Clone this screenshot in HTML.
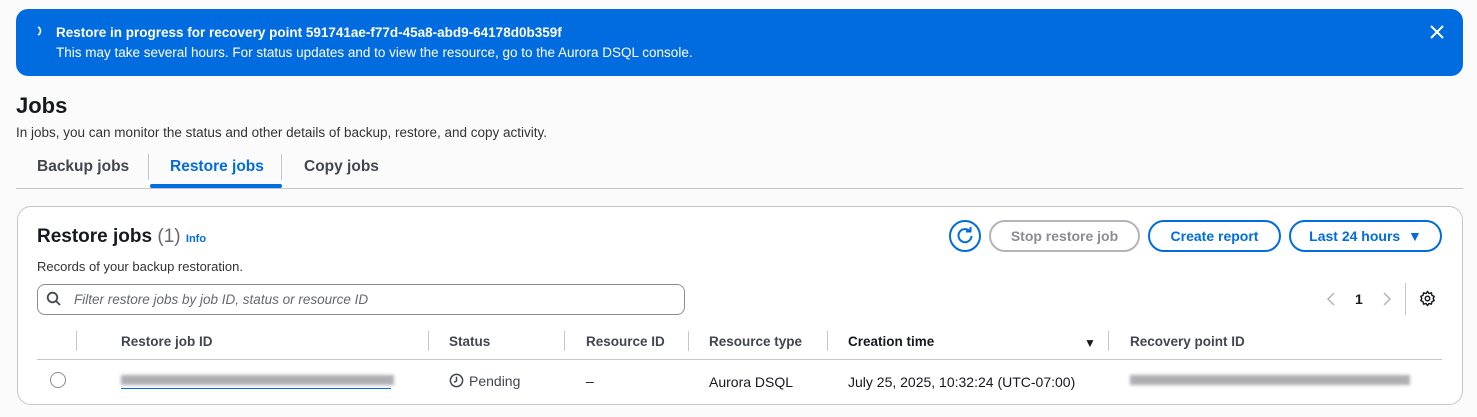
<!DOCTYPE html>
<html><head><style>
*{box-sizing:border-box;margin:0;padding:0}
body{width:1477px;height:417px;background:#fbfbfb;font-family:"Liberation Sans",sans-serif;color:#16191f;position:relative;overflow:hidden;font-size:13px}
.a{position:absolute;white-space:nowrap}
.flash{position:absolute;left:16px;top:9px;width:1447px;height:67px;background:#006ce0;border-radius:12px;color:#fff}
.card{position:absolute;left:17px;top:206px;width:1446px;height:199px;background:#fff;border:1px solid #c6c6cd;border-radius:14px}
.btn{position:absolute;top:220px;height:32px;border:2px solid #006ce0;border-radius:16px;color:#006ce0;font-weight:bold;font-size:14px;text-align:center;line-height:28px}
.th{position:absolute;top:334px;font-weight:bold;font-size:13.5px;color:#424650}
.sep{position:absolute;top:331px;width:1px;height:20px;background:#c6c6cd}
.blur{position:absolute;height:10px;background:#9a9aa0;filter:blur(1.5px);opacity:.8}
</style></head><body>
<div class="flash">
<svg class="a" style="left:19px;top:16px" width="10" height="12" viewBox="0 0 10 12"><path d="M3 2 A4.5 4.5 0 0 1 3 10" fill="none" stroke="#fff" stroke-width="1.6"/></svg>
<div class="a" style="left:40px;top:16px;font-weight:bold;font-size:13.5px">Restore in progress for recovery point 591741ae-f77d-45a8-abd9-64178d0b359f</div>
<div class="a" style="left:40px;top:36px;font-size:13.5px">This may take several hours. For status updates and to view the resource, go to the Aurora DSQL console.</div>
<svg class="a" style="left:1414px;top:16px" width="14" height="14" viewBox="0 0 14 14"><path d="M1 1L13 13M13 1L1 13" stroke="#fff" stroke-width="2"/></svg>
</div>
<div class="a" style="left:16px;top:93px;font-size:22px;font-weight:bold">Jobs</div>
<div class="a" style="left:16px;top:125px;font-size:13.5px;color:#333">In jobs, you can monitor the status and other details of backup, restore, and copy activity.</div>
<div class="a" style="left:37px;top:158px;font-size:15.5px;font-weight:bold;color:#424650">Backup jobs</div>
<div class="a" style="left:148px;top:154px;width:1px;height:26px;background:#c6c6cd"></div>
<div class="a" style="left:170px;top:158px;font-size:15.5px;font-weight:bold;color:#006ce0">Restore jobs</div>
<div class="a" style="left:281px;top:154px;width:1px;height:26px;background:#c6c6cd"></div>
<div class="a" style="left:304px;top:158px;font-size:15.5px;font-weight:bold;color:#424650">Copy jobs</div>
<div class="a" style="left:150px;top:184px;width:132px;height:4px;background:#006ce0;border-radius:2px"></div>
<div class="a" style="left:16px;top:188px;width:1447px;height:1px;background:#c6c6cd"></div>
<div class="card"></div>
<div class="a" style="left:37px;top:226px;font-size:19px;font-weight:bold">Restore jobs <span style="font-weight:normal;color:#656871">(1)</span> <span style="font-size:11px;color:#006ce0">Info</span></div>
<div class="a" style="left:37px;top:259px;font-size:13px;color:#333">Records of your backup restoration.</div>
<div class="a" style="left:949px;top:220px;width:32px;height:32px;border:2px solid #006ce0;border-radius:50%"></div>
<svg class="a" style="left:955px;top:226px" width="20" height="20" viewBox="0 0 20 20"><path d="M15 5.5A6.5 6.5 0 1 0 16.5 10" fill="none" stroke="#006ce0" stroke-width="2"/><path d="M11 5.5H15.5V1" fill="none" stroke="#006ce0" stroke-width="2"/></svg>
<div class="btn" style="left:989px;width:151px;border-color:#b4b4bb;color:#8c8c94">Stop restore job</div>
<div class="btn" style="left:1148px;width:133px">Create report</div>
<div class="btn" style="left:1289px;width:153px">Last 24 hours &nbsp;&#9660;</div>
<div class="a" style="left:37px;top:284px;width:648px;height:31px;border:1px solid #8c8c94;border-radius:8px"></div>
<svg class="a" style="left:46px;top:291px" width="16" height="16" viewBox="0 0 16 16"><circle cx="6.5" cy="6.5" r="4.8" fill="none" stroke="#424650" stroke-width="1.8"/><path d="M10 10L14 14" stroke="#424650" stroke-width="1.8"/></svg>
<div class="a" style="left:74px;top:292px;font-style:italic;color:#656871;font-size:13.5px">Filter restore jobs by job ID, status or resource ID</div>
<svg class="a" style="left:1326px;top:292px" width="10" height="14" viewBox="0 0 10 14"><path d="M8 1L2 7L8 13" fill="none" stroke="#b4b4bb" stroke-width="1.5"/></svg>
<div class="a" style="left:1355px;top:291px;font-weight:bold;font-size:14px">1</div>
<svg class="a" style="left:1382px;top:292px" width="10" height="14" viewBox="0 0 10 14"><path d="M2 1L8 7L2 13" fill="none" stroke="#b4b4bb" stroke-width="1.5"/></svg>
<div class="a" style="left:1405px;top:283px;width:1px;height:32px;background:#c6c6cd"></div>
<svg class="a" style="left:1419px;top:290px" width="17" height="17" viewBox="0 0 24 24"><path d="M12 2l2 3 3.5-1 .8 3.5 3.2 1.5-1.5 3 1.5 3-3.2 1.5-.8 3.5-3.5-1-2 3-2-3-3.5 1-.8-3.5L2.5 15 4 12 2.5 9l3.2-1.5.8-3.5 3.5 1z" fill="none" stroke="#16191f" stroke-width="2" stroke-linejoin="round"/><circle cx="12" cy="12" r="3.2" fill="none" stroke="#16191f" stroke-width="2"/></svg>
<div class="sep" style="left:76px"></div>
<div class="th" style="left:121px">Restore job ID</div>
<div class="sep" style="left:428px"></div>
<div class="th" style="left:449px">Status</div>
<div class="sep" style="left:564px"></div>
<div class="th" style="left:586px">Resource ID</div>
<div class="sep" style="left:688px"></div>
<div class="th" style="left:709px">Resource type</div>
<div class="sep" style="left:827px"></div>
<div class="th" style="left:848px;color:#16191f">Creation time</div>
<div class="a" style="left:1084px;top:336px;font-size:12px">&#9660;</div>
<div class="sep" style="left:1108px"></div>
<div class="th" style="left:1130px">Recovery point ID</div>
<div class="a" style="left:37px;top:359px;width:1405px;height:1px;background:#c6c6cd"></div>
<div class="a" style="left:50px;top:372px;width:16px;height:16px;border:1px solid #8c8c94;border-radius:50%"></div>
<div class="blur" style="left:121px;top:375px;width:273px"></div>
<div class="a" style="left:121px;top:388px;width:270px;height:1px;background:#006ce0"></div>
<svg class="a" style="left:449px;top:373px" width="15" height="15" viewBox="0 0 16 16"><circle cx="8" cy="8" r="6.5" fill="none" stroke="#424650" stroke-width="1.6"/><path d="M8 4V8.5L5.5 10" fill="none" stroke="#424650" stroke-width="1.6"/></svg>
<div class="a" style="left:469px;top:373px;font-size:14px;color:#424650">Pending</div>
<div class="a" style="left:586px;top:373px;font-size:14px">&ndash;</div>
<div class="a" style="left:709px;top:374px;font-size:14px">Aurora DSQL</div>
<div class="a" style="left:848px;top:374px;font-size:14px">July 25, 2025, 10:32:24 (UTC-07:00)</div>
<div class="blur" style="left:1130px;top:375px;width:280px"></div>
</body></html>
